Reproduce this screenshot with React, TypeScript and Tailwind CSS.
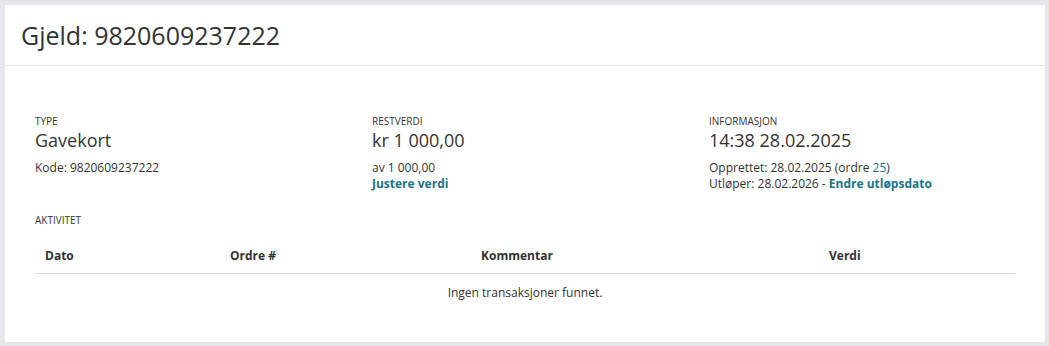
export default function App() {
    const label = 'text-[10px] leading-[14px] uppercase text-[#333]'
    const big = 'text-[18px] leading-[24px] text-[#333]'
    const link = 'font-bold text-[#17758b]'

    return (
        <div className="min-h-[346px] bg-[#e6e7eb] p-[5px] pr-[4px] pb-[4px]" style={{ fontFamily: '"Open Sans", sans-serif' }}>
            <div className="bg-white min-h-[337px]">
                <div className="h-[61px] border-b border-[#e9e9e9] px-[16px] flex items-center">
                    <h1 className="text-[25px] leading-[32px] text-[#333] font-normal pb-[1px]">Gjeld: 9820609237222</h1>
                </div>

                <div className="px-[30px] pt-[48px] pb-[29px]">
                    <div className="grid grid-cols-3 w-[1011px]">
                        <div>
                            <div className={label}>Type</div>
                            <div className={big}>Gavekort</div>
                            <div className="mt-[8px] text-[12px] leading-[16px] text-[#333]">Kode: 9820609237222</div>
                        </div>
                        <div>
                            <div className={label}>Restverdi</div>
                            <div className={big}>kr 1 000,00</div>
                            <div className="mt-[8px] text-[12px] leading-[16px] text-[#333]">
                                <div>av 1 000,00</div>
                                <a className={link}>Justere verdi</a>
                            </div>
                        </div>
                        <div>
                            <div className={label}>Informasjon</div>
                            <div className={big}>14:38 28.02.2025</div>
                            <div className="mt-[8px] text-[12px] leading-[16px] text-[#333]">
                                <div>
                                    Opprettet: 28.02.2025 (ordre <a className="text-[#17758b]">25</a>)
                                </div>
                                <div>
                                    Utløper: 28.02.2026 - <a className={link}>Endre utløpsdato</a>
                                </div>
                            </div>
                        </div>
                    </div>

                    <div className={`${label} mt-[21px]`}>Aktivitet</div>

                    <table className="mt-[12px] w-[980px] table-fixed border-collapse text-[12px] leading-[18px] text-[#333]">
                        <thead>
                            <tr className="border-b border-[#d5dbe0]">
                                <th className="w-[185px] text-left font-bold px-[10px] pt-[8px] pb-[8px]">Dato</th>
                                <th className="w-[251px] text-left font-bold px-[10px] pt-[8px] pb-[8px]">Ordre #</th>
                                <th className="w-[348px] text-left font-bold px-[10px] pt-[8px] pb-[8px]">Kommentar</th>
                                <th className="w-[196px] text-left font-bold px-[10px] pt-[8px] pb-[8px]">Verdi</th>
                            </tr>
                        </thead>
                        <tbody>
                            <tr>
                                <td colSpan={4} className="text-center py-[10px]">Ingen transaksjoner funnet.</td>
                            </tr>
                        </tbody>
                    </table>
                </div>
            </div>
        </div>
    )
}
